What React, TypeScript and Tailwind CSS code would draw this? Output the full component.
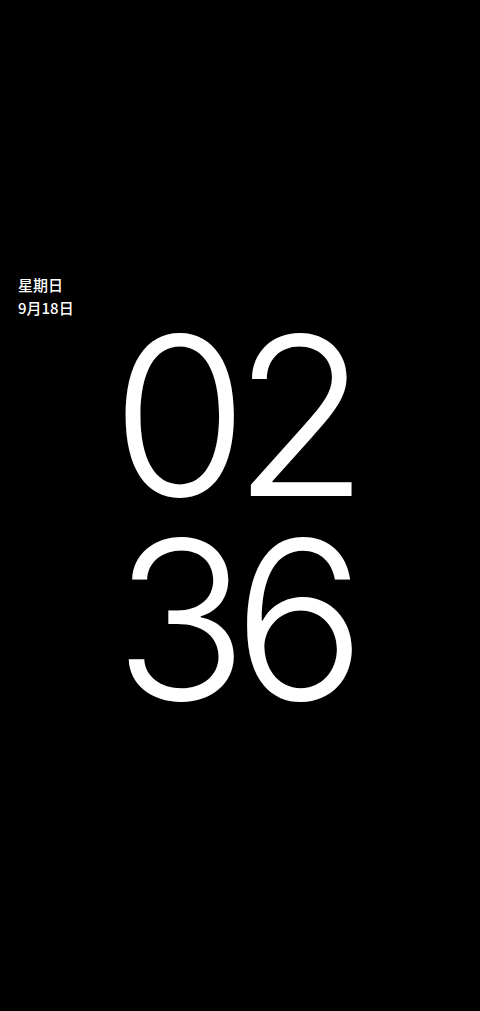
export default function App() {
  return (
    <div className="h-[1011px] w-full bg-black text-white overflow-hidden">
      <div className="pt-[273px] pl-[18px] font-['Noto_Sans_CJK_SC',sans-serif] text-[15px] leading-[23px] font-medium">
        <div>星期日</div>
        <div>9月18日</div>
      </div>
      <div className="mt-[-5px] flex flex-col items-center font-['Inter','Noto_Sans',sans-serif] font-light text-[221px] leading-[204px] tracking-[-15px]">
        <div className="pr-[15px]">02</div>
        <div className="pr-[15px]">36</div>
      </div>
    </div>
  )
}
